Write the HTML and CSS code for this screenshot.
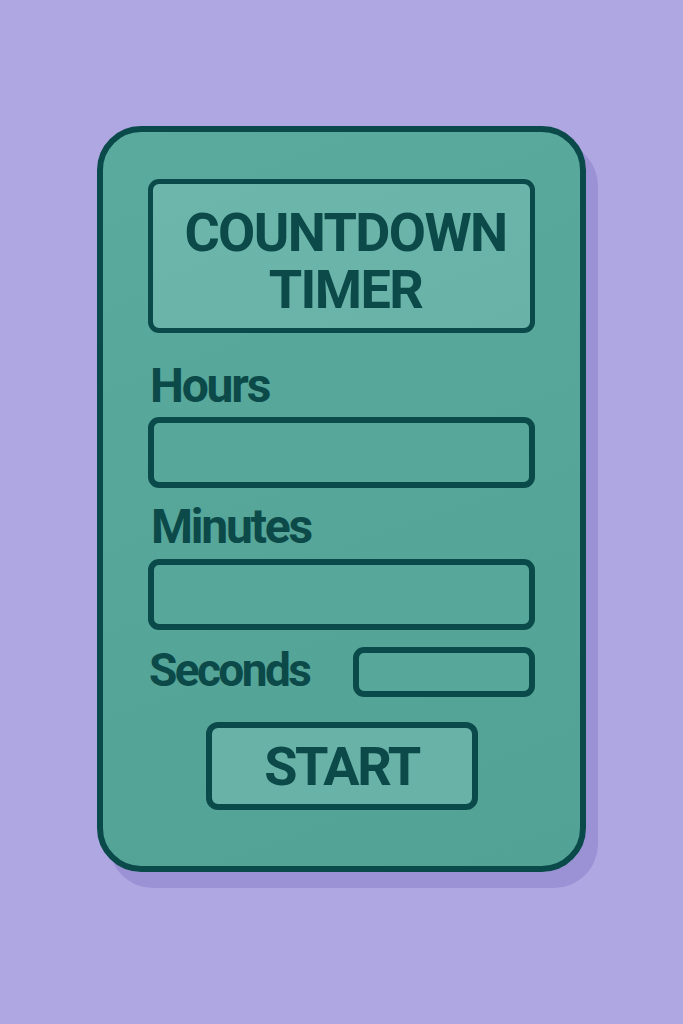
FILE: index.html
```html
<!DOCTYPE html>
<html lang="en">
<head>
<meta charset="utf-8">
<title>Countdown Timer</title>
<link rel="stylesheet" href="styles.css">
</head>
<body>
  <main class="stage">
    <section class="card">
      <h1 class="title">COUNTDOWN<br>TIMER</h1>
      <label class="label label-hours" for="hours">Hours</label>
      <input class="field field-hours" id="hours" type="text">
      <label class="label label-minutes" for="minutes">Minutes</label>
      <input class="field field-minutes" id="minutes" type="text">
      <div class="seconds-row">
        <label class="label label-seconds" for="seconds">Seconds</label>
        <input class="field field-small" id="seconds" type="text">
      </div>
      <button class="start" type="button">START</button>
    </section>
  </main>
</body>
</html>
```
FILE: styles.css
```css
html, body {
  margin: 0;
  padding: 0;
}

body {
  background: #afa7e2;
  font-family: Roboto, "Liberation Sans", sans-serif;
  color: #0c4949;
  width: 683px;
  height: 1024px;
  overflow: hidden;
}

.stage {
  padding: 126px 0 0 97px;
}

.card {
  box-sizing: border-box;
  width: 489px;
  height: 746px;
  border: 6px solid #0b4a4a;
  border-radius: 44px;
  background: linear-gradient(160deg, #5aab9e 0%, #55a598 60%, #52a295 100%);
  box-shadow: 12px 16px 0 #9b92d6;
  padding: 47px 45px 0 45px;
  display: flex;
  flex-direction: column;
}

.title {
  box-sizing: border-box;
  height: 154px;
  margin: 0;
  border: 5px solid #0b4a4a;
  border-radius: 11px;
  background: linear-gradient(160deg, #6db6ab, #68b2a7);
  font-size: 54px;
  font-weight: 700;
  line-height: 57px;
  letter-spacing: -1.6px;
  text-align: center;
  padding-top: 20px;
  padding-left: 8px;
}

.label {
  font-size: 48px;
  font-weight: 700;
  line-height: 44px;
  letter-spacing: -2.2px;
  color: #0c4949;
}

.label-hours {
  margin: 31px 0 0 2px;
}

.label-minutes {
  margin: 17px 0 0 3px;
}

.field {
  box-sizing: border-box;
  height: 71px;
  border: 6px solid #0b4a4a;
  border-radius: 11px;
  background: #57a79a;
  outline: none;
  padding: 0;
}

.field-hours {
  margin: 9px 0 0 0;
}

.field-minutes {
  margin: 10px 0 0 0;
}

.seconds-row {
  display: flex;
  align-items: flex-start;
  justify-content: space-between;
  margin-top: 17px;
  height: 50px;
}

.seconds-row .label-seconds {
  font-size: 46px;
  letter-spacing: -2.6px;
  margin: 1px 0 0 1px;
}

.field-small {
  width: 182px;
  height: 50px;
  margin: 0;
}

.start {
  box-sizing: border-box;
  align-self: center;
  width: 272px;
  height: 88px;
  margin: 25px 0 0 0;
  border: 6px solid #0b4a4a;
  border-radius: 12px;
  background: #68b2a7;
  font-family: Roboto, "Liberation Sans", sans-serif;
  font-size: 54px;
  font-weight: 700;
  letter-spacing: -2.4px;
  color: #0c4949;
  padding: 0;
  cursor: pointer;
}
```
